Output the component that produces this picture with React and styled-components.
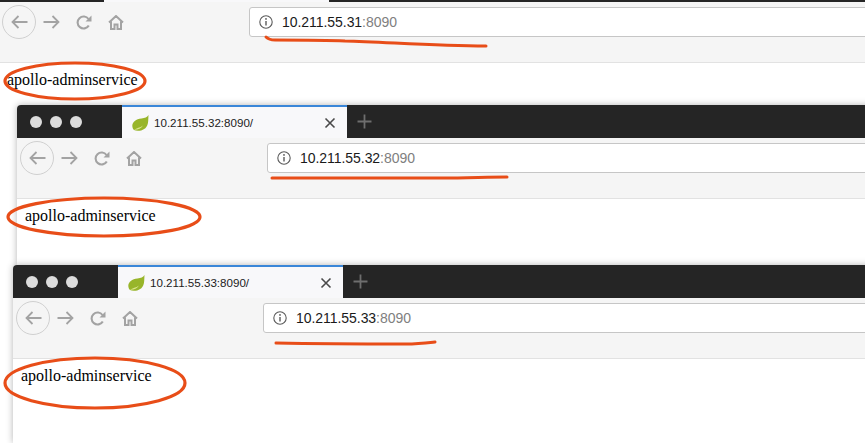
import React from 'react';
import styled, { createGlobalStyle } from 'styled-components';

const GlobalStyle = createGlobalStyle`
  html, body {
    margin: 0;
    padding: 0;
    background: #fff;
    overflow: hidden;
  }
`;

const Page = styled.div`
  position: relative;
  width: 865px;
  height: 443px;
  overflow: hidden;
  background: #fff;
  display: flex;
  flex-direction: column;
`;

const Window = styled.div`
  display: flex;
  flex-direction: column;
  flex: ${(p) => (p.$fill ? 1 : 'none')};
  margin-left: ${(p) => p.$left}px;
  margin-right: -12px;
  background: #fff;
  border-radius: ${(p) => (p.$left > 0 ? '4px 0 0 0' : '0')};
  box-shadow: ${(p) => (p.$left > 0 ? '0 0 7px rgba(0, 0, 0, 0.3)' : 'none')};
  overflow: hidden;
`;

const TabBar = styled.div`
  display: flex;
  height: ${(p) => (p.$cropped ? 2 : 33)}px;
  flex: none;
  background: #252525;
`;

const Dots = styled.div`
  width: 105px;
  flex: none;
  display: flex;
  align-items: center;
  gap: 8px;
  padding-left: 13px;
  box-sizing: border-box;
`;

const Dot = styled.span`
  width: 12px;
  height: 12px;
  border-radius: 50%;
  background: #dcdcdc;
`;

const Tab = styled.div`
  width: 225px;
  flex: none;
  display: flex;
  align-items: center;
  box-sizing: border-box;
  padding: 0 11px 0 10px;
  gap: 5px;
  background: #f8f8fa;
  border-top: ${(p) => (p.$cropped ? 0 : 2)}px solid #3a86d8;
`;

const TabTitle = styled.span`
  flex: 1;
  font: 11.6px "Liberation Sans", Arial, sans-serif;
  color: #1c1c1c;
`;

const NewTab = styled.div`
  width: 34px;
  display: flex;
  align-items: center;
  justify-content: center;
`;

const Toolbar = styled.div`
  height: 61px;
  flex: none;
  box-sizing: border-box;
  display: flex;
  align-items: flex-start;
  padding: 3px 0 0 3px;
  background: #f5f5f5;
  border-bottom: 1px solid #e2e2e2;
`;

const BackButton = styled.div`
  width: 34px;
  height: 34px;
  flex: none;
  box-sizing: border-box;
  border: 1px solid #d0d0d0;
  border-radius: 50%;
  display: flex;
  align-items: center;
  justify-content: center;
`;

const NavIcon = styled.div`
  flex: none;
  height: 34px;
  margin-left: ${(p) => p.$gap}px;
  display: flex;
  align-items: center;
`;

const UrlBar = styled.div`
  flex: 1;
  height: 30px;
  margin: 2px 0 0 125px;
  box-sizing: border-box;
  display: flex;
  align-items: center;
  gap: 9px;
  padding-left: 9px;
  background: #fff;
  border: 1px solid #c6c6c6;
  border-radius: 3px;
`;

const UrlText = styled.span`
  font: 14px "Liberation Sans", Arial, sans-serif;
  letter-spacing: -0.05px;
  color: #1a1a1a;
`;

const UrlPort = styled.span`
  color: #808080;
`;

const Content = styled.div`
  height: ${(p) => (p.$height ? `${p.$height}px` : 'auto')};
  flex: ${(p) => (p.$height ? 'none' : 1)};
  box-sizing: border-box;
  padding: 8px;
  background: #fff;
  font: 16px/18px "Liberation Serif", "Times New Roman", serif;
  color: #000;
`;

const Annotations = styled.svg`
  position: absolute;
  left: 0;
  top: 0;
  pointer-events: none;
`;

const Leaf = () => (
  <svg width="17" height="16" viewBox="0 0 17 16">
    <path d="M16.500 0C15 2.400 13 3 9.500 3.400 4 4 .3 6.800.3 10.800c0 1.800.7 3.400 1.700 4.200 1.300.7 3.400 1 5.500.7 5-.6 7.800-3.700 8.500-8 .4-2.800.3-5.200.5-7.700z" fill="#98b52a" />
    <path d="M2 14.800C4.500 13 8 12.800 11 10.500 8.800 14 6 15 2 14.800z" fill="#d9e58a" />
  </svg>
);

const CloseIcon = () => (
  <svg width="12" height="12" viewBox="0 0 12 12">
    <path d="M1.500 1.500l9 9M10.500 1.500l-9 9" stroke="#4a4a4a" strokeWidth="1.600" />
  </svg>
);

const PlusIcon = () => (
  <svg width="15" height="15" viewBox="0 0 15 15">
    <path d="M7.500.5v14M.5 7.500h14" stroke="#6e6e6e" strokeWidth="1.800" />
  </svg>
);

const ArrowIcon = ({ left }) => (
  <svg width="17" height="14" viewBox="0 0 17 14">
    <path
      d={left ? 'M16.500 7H1.500M7.500 1L1.500 7l6 6' : 'M.5 7h15M9.500 1l6 6-6 6'}
      fill="none"
      stroke="#a3a3a3"
      strokeWidth="1.800"
    />
  </svg>
);

const ReloadIcon = () => (
  <svg width="16" height="15" viewBox="0 0 16 15">
    <path d="M12.800 10.500A6 6 0 1 1 12.500 4" fill="none" stroke="#a3a3a3" strokeWidth="2.100" />
    <path d="M15.500.5v6h-6z" fill="#a3a3a3" />
  </svg>
);

const HomeIcon = () => (
  <svg width="16" height="15" viewBox="0 0 16 15">
    <path
      d="M1 7.500L8 1l7 6.500M3 6.500V14h3.500V9.500h3V14H13V6.500"
      fill="none"
      stroke="#a3a3a3"
      strokeWidth="2"
    />
  </svg>
);

const InfoIcon = () => (
  <svg width="14" height="14" viewBox="0 0 14 14">
    <circle cx="7" cy="7" r="6.200" fill="none" stroke="#5a5a5a" strokeWidth="1.100" />
    <path d="M7 6v4.500" stroke="#5a5a5a" strokeWidth="1.400" />
    <circle cx="7" cy="3.900" r=".9" fill="#5a5a5a" />
  </svg>
);

const BrowserWindow = ({ ip, left = 0, cropped, contentHeight, fill }) => (
  <Window $left={left} $fill={fill}>
    <TabBar $cropped={cropped}>
      <Dots>{!cropped && [0, 1, 2].map((i) => <Dot key={i} />)}</Dots>
      <Tab $cropped={cropped}>
        {!cropped && (
          <>
            <Leaf />
            <TabTitle>{ip}:8090/</TabTitle>
            <CloseIcon />
          </>
        )}
      </Tab>
      {!cropped && (
        <NewTab>
          <PlusIcon />
        </NewTab>
      )}
    </TabBar>
    <Toolbar>
      <BackButton>
        <ArrowIcon left />
      </BackButton>
      <NavIcon $gap={7}>
        <ArrowIcon />
      </NavIcon>
      <NavIcon $gap={16}>
        <ReloadIcon />
      </NavIcon>
      <NavIcon $gap={16}>
        <HomeIcon />
      </NavIcon>
      <UrlBar>
        <InfoIcon />
        <UrlText>
          {ip}
          <UrlPort>:8090</UrlPort>
        </UrlText>
      </UrlBar>
    </Toolbar>
    <Content $height={contentHeight}>apollo-adminservice</Content>
  </Window>
);

export default function App() {
  return (
    <Page>
      <GlobalStyle />
      <BrowserWindow ip="10.211.55.31" left={-1} cropped contentHeight={42} />
      <BrowserWindow ip="10.211.55.32" left={17} contentHeight={66} />
      <BrowserWindow ip="10.211.55.33" left={13} fill />
      <Annotations width="865" height="443" viewBox="0 0 865 443" fill="none" stroke="#e84d18" strokeLinecap="round">
        <path strokeWidth="3" d="M266 37c2 2 4 3 9 3 20 0 50 0 70 1 40 1 90 5 141 5" />
        <ellipse strokeWidth="3.200" cx="75" cy="81" rx="70" ry="18" />
        <path strokeWidth="3" d="M272 178c60 0 120 0 170 0 25 0 45-1 65-1" />
        <ellipse strokeWidth="3.200" cx="104" cy="217" rx="96" ry="19" />
        <path strokeWidth="3" d="M276 343c50 1 90 1 130 1 12 0 20-1 29-2" />
        <ellipse strokeWidth="3.200" cx="95" cy="383" rx="90" ry="25" />
      </Annotations>
    </Page>
  );
}
